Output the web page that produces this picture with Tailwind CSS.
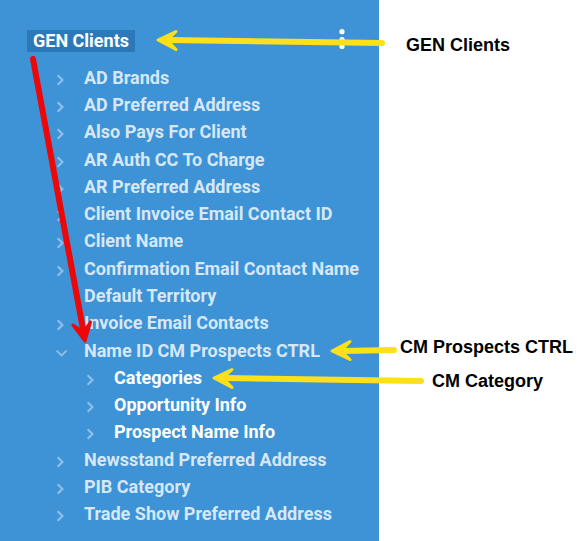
<!DOCTYPE html>
<html lang="en">
<head>
<meta charset="utf-8">
<meta name="viewport" content="width=device-width, initial-scale=1">
<title>GEN Clients</title>
<script src="https://cdn.jsdelivr.net/npm/@tailwindcss/browser@4"></script>
</head>
<body class="bg-white">
<svg class="hidden" aria-hidden="true">
  <symbol id="right" viewBox="0 0 12 12"><path d="M2.700 1.300 7.400 6 2.700 10.700" fill="none" stroke="currentColor" stroke-width="2.200"/></symbol>
  <symbol id="down" viewBox="0 0 12 12"><path d="M1.600 3.600 6.600 8.400 11.600 3.600" fill="none" stroke="currentColor" stroke-width="2"/></symbol>
</svg>
<main class="relative flex min-h-screen">
  <nav aria-label="Fields" class="flex w-[379px] shrink-0 flex-col bg-[#3e92d6] pb-[13px] font-['Roboto',sans-serif] text-lg leading-6 font-bold text-[#d6e8f7]">
    <header class="flex items-center justify-between pt-[29px] pr-[31px] pb-[11px] pl-[27px]">
      <h1 class="bg-[#2b79b9] px-[6px] leading-[22px] text-white">GEN Clients</h1>
      <button type="button" aria-label="More options" class="h-6 text-white">
        <svg class="h-6 w-3" viewBox="0 0 12 24" fill="currentColor"><circle cx="6" cy="2.700" r="2.600"/><circle cx="6" cy="10.500" r="2.600"/><circle cx="6" cy="17.500" r="2.600"/></svg>
      </button>
    </header>
    <ul class="grid flex-1 auto-rows-fr pl-[55px]">
      <li class="flex items-center gap-[17px]"><button type="button" aria-label="Expand AD Brands" class="pt-1 text-[#8dbfe8]"><svg class="size-3"><use href="#right"/></svg></button><span>AD Brands</span></li>
      <li class="flex items-center gap-[17px]"><button type="button" aria-label="Expand AD Preferred Address" class="pt-1 text-[#8dbfe8]"><svg class="size-3"><use href="#right"/></svg></button><span>AD Preferred Address</span></li>
      <li class="flex items-center gap-[17px]"><button type="button" aria-label="Expand Also Pays For Client" class="pt-1 text-[#8dbfe8]"><svg class="size-3"><use href="#right"/></svg></button><span>Also Pays For Client</span></li>
      <li class="flex items-center gap-[17px]"><button type="button" aria-label="Expand AR Auth CC To Charge" class="pt-1 text-[#8dbfe8]"><svg class="size-3"><use href="#right"/></svg></button><span>AR Auth CC To Charge</span></li>
      <li class="flex items-center gap-[17px]"><button type="button" aria-label="Expand AR Preferred Address" class="pt-1 text-[#8dbfe8]"><svg class="size-3"><use href="#right"/></svg></button><span>AR Preferred Address</span></li>
      <li class="flex items-center gap-[17px]"><button type="button" aria-label="Expand Client Invoice Email Contact ID" class="pt-1 text-[#8dbfe8]"><svg class="size-3"><use href="#right"/></svg></button><span>Client Invoice Email Contact ID</span></li>
      <li class="flex items-center gap-[17px]"><button type="button" aria-label="Expand Client Name" class="pt-1 text-[#8dbfe8]"><svg class="size-3"><use href="#right"/></svg></button><span>Client Name</span></li>
      <li class="flex items-center gap-[17px]"><button type="button" aria-label="Expand Confirmation Email Contact Name" class="pt-1 text-[#8dbfe8]"><svg class="size-3"><use href="#right"/></svg></button><span>Confirmation Email Contact Name</span></li>
      <li class="flex items-center pl-[29px]"><span>Default Territory</span></li>
      <li class="flex items-center gap-[17px]"><button type="button" aria-label="Expand Invoice Email Contacts" class="pt-1 text-[#8dbfe8]"><svg class="size-3"><use href="#right"/></svg></button><span>Invoice Email Contacts</span></li>
      <li class="row-span-4 grid auto-rows-fr">
        <div class="flex items-center gap-[17px]"><button type="button" aria-label="Collapse Name ID CM Prospects CTRL" aria-expanded="true" class="pt-1 text-[#8dbfe8]"><svg class="size-3"><use href="#down"/></svg></button><span>Name ID CM Prospects CTRL</span></div>
        <ul class="row-span-3 grid auto-rows-fr pl-[30px] text-white">
          <li class="flex items-center gap-[17px]"><button type="button" aria-label="Expand Categories" class="pt-1 text-[#8dbfe8]"><svg class="size-3"><use href="#right"/></svg></button><span>Categories</span></li>
          <li class="flex items-center gap-[17px]"><button type="button" aria-label="Expand Opportunity Info" class="pt-1 text-[#8dbfe8]"><svg class="size-3"><use href="#right"/></svg></button><span>Opportunity Info</span></li>
          <li class="flex items-center gap-[17px]"><button type="button" aria-label="Expand Prospect Name Info" class="pt-1 text-[#8dbfe8]"><svg class="size-3"><use href="#right"/></svg></button><span>Prospect Name Info</span></li>
        </ul>
      </li>
      <li class="flex items-center gap-[17px]"><button type="button" aria-label="Expand Newsstand Preferred Address" class="pt-1 text-[#8dbfe8]"><svg class="size-3"><use href="#right"/></svg></button><span>Newsstand Preferred Address</span></li>
      <li class="flex items-center gap-[17px]"><button type="button" aria-label="Expand PIB Category" class="pt-1 text-[#8dbfe8]"><svg class="size-3"><use href="#right"/></svg></button><span>PIB Category</span></li>
      <li class="flex items-center gap-[17px]"><button type="button" aria-label="Expand Trade Show Preferred Address" class="pt-1 text-[#8dbfe8]"><svg class="size-3"><use href="#right"/></svg></button><span>Trade Show Preferred Address</span></li>
    </ul>
  </nav>
  <aside class="flex flex-1 flex-col pt-[35px] font-['Liberation_Sans',Arial,sans-serif] text-lg leading-5 font-bold whitespace-nowrap text-black">
    <p class="pl-[27px]">GEN Clients</p>
    <p class="pt-[282px] pl-[21px]">CM Prospects CTRL</p>
    <p class="pt-[14px] pl-[53px]">CM Category</p>
  </aside>
  <svg class="pointer-events-none absolute top-0 left-0 h-[541px] w-[587px]" viewBox="0 0 587 541" fill="none" stroke-linecap="round" stroke-linejoin="round" aria-hidden="true">
    <g stroke="#fde01c" fill="#fde01c">
      <path d="M168 40 382 43" stroke-width="6"/>
      <path d="M176 31.500 158 40 176 49.500 167 40Z" stroke-width="3"/>
      <path d="M342 351 394 350" stroke-width="6"/>
      <path d="M350 341.500 332 351 350 359.500 341 351Z" stroke-width="3"/>
      <path d="M224 378 421 381" stroke-width="6"/>
      <path d="M232 369.500 214 378 232 387.500 223 378Z" stroke-width="3"/>
    </g>
    <g stroke="#ec0808" fill="#ec0808">
      <path d="M33 59 83 329" stroke-width="6"/>
      <path d="M73 325 85 341 90.500 322 83.500 332Z" stroke-width="3"/>
    </g>
  </svg>
</main>
</body>
</html>
